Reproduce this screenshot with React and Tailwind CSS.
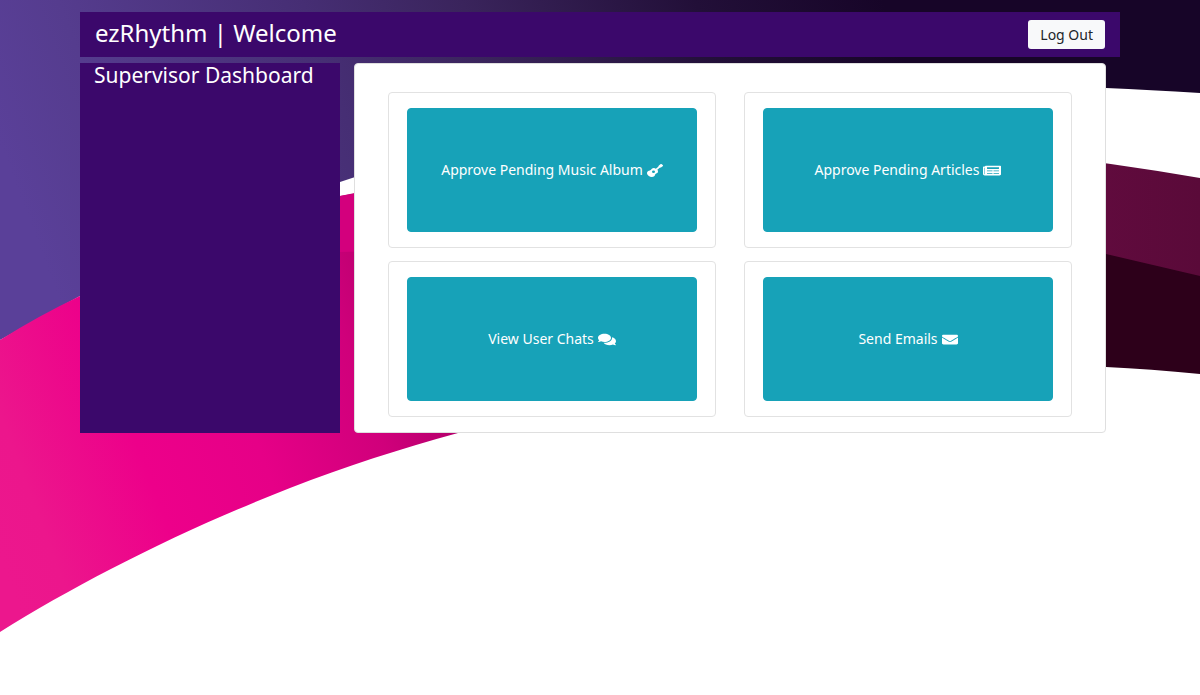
import { FaComments, FaEnvelope, FaGuitar, FaNewspaper } from "react-icons/fa";

const actions = [
  { label: "Approve Pending Music Album", Icon: FaGuitar, size: "h-[13px] w-4" },
  { label: "Approve Pending Articles", Icon: FaNewspaper, size: "h-[13px] w-[18px]" },
  { label: "View User Chats", Icon: FaComments, size: "h-[13px] w-[18px]" },
  { label: "Send Emails", Icon: FaEnvelope, size: "h-[13px] w-4" },
];

function Backdrop() {
  return (
    <svg
      className="absolute inset-0 -z-10 h-full w-full"
      viewBox="0 0 1200 695"
      preserveAspectRatio="none"
      aria-hidden="true"
    >
      <defs>
        <linearGradient id="violet" gradientUnits="userSpaceOnUse" x1="40" y1="250" x2="860" y2="-60">
          <stop offset="0" stopColor="#5a4099" />
          <stop offset="0.12" stopColor="#553c8e" />
          <stop offset="0.38" stopColor="#462e74" />
          <stop offset="0.55" stopColor="#3a245c" />
          <stop offset="0.8" stopColor="#220f38" />
          <stop offset="1" stopColor="#170528" />
        </linearGradient>
        <linearGradient id="pink" gradientUnits="userSpaceOnUse" x1="0" y1="560" x2="480" y2="380">
          <stop offset="0" stopColor="#ec178d" />
          <stop offset="0.1" stopColor="#ec168c" />
          <stop offset="0.33" stopColor="#ed008a" />
          <stop offset="0.55" stopColor="#e60087" />
          <stop offset="0.78" stopColor="#d0007b" />
          <stop offset="1" stopColor="#a60064" />
        </linearGradient>
        <linearGradient id="plum" x1="0" x2="1" y1="0" y2="0">
          <stop offset="0" stopColor="#670b42" />
          <stop offset="1" stopColor="#5a0a39" />
        </linearGradient>
      </defs>
      <path d="M0 0H1200V93Q1150 90 1106 88C820 75 560 108 340 182Q200 230 80 296L0 340Z" fill="url(#violet)" />
      <path
        d="M0 340Q38 316 80 296Q210 225 340 196Q480 163 620 200V390Q540 408 458 433C400 449 346 466 290 488C180 531 80 582 0 632Z"
        fill="url(#pink)"
      />
      <path d="M340 196L620 150V245L340 252Z" fill="#d3007d" />
      <path d="M1000 150Q1106 162 1200 178V280H1000Z" fill="url(#plum)" />
      <path d="M1000 232L1106 254L1200 276V374Q1150 369 1106 367L1000 363Z" fill="#2d001a" />
    </svg>
  );
}

function ActionCard({ label, Icon, size }) {
  return (
    <div className="rounded border border-[#e2e2e2] bg-white px-[18px] py-[15px]">
      <button
        type="button"
        className="flex h-[124px] w-full items-center justify-center gap-1 rounded border border-[#17a2b8] bg-[#17a2b8] text-[14px] leading-5 text-white"
      >
        <span>{label}</span>
        <Icon className={size} preserveAspectRatio="none" aria-hidden="true" />
      </button>
    </div>
  );
}

export default function App() {
  return (
    <div className="relative isolate min-h-screen bg-white px-20 pt-3 font-['Noto_Sans',sans-serif]">
      <Backdrop />
      <header className="flex h-[45px] items-center justify-between bg-[#3b086b] px-[15px]">
        <h1 className="pb-1 text-[24px] leading-8 text-white">ezRhythm | Welcome</h1>
        <button
          type="button"
          className="h-[29px] rounded-[3px] bg-[#f8f9fa] px-3 text-[14px] leading-5 text-[#212529]"
        >
          Log Out
        </button>
      </header>
      <div className="mt-[6px] flex">
        <aside className="w-1/4 bg-[#3b086b] px-[14px]">
          <h2 className="text-[21px] leading-6 whitespace-nowrap text-white">Supervisor Dashboard</h2>
        </aside>
        <div className="w-3/4 px-[14px]">
          <main className="grid grid-cols-2 gap-x-7 gap-y-[13px] rounded border border-[#dfdfdf] bg-white px-[33px] pt-7 pb-[15px]">
            {actions.map((action) => (
              <ActionCard key={action.label} {...action} />
            ))}
          </main>
        </div>
      </div>
    </div>
  );
}
